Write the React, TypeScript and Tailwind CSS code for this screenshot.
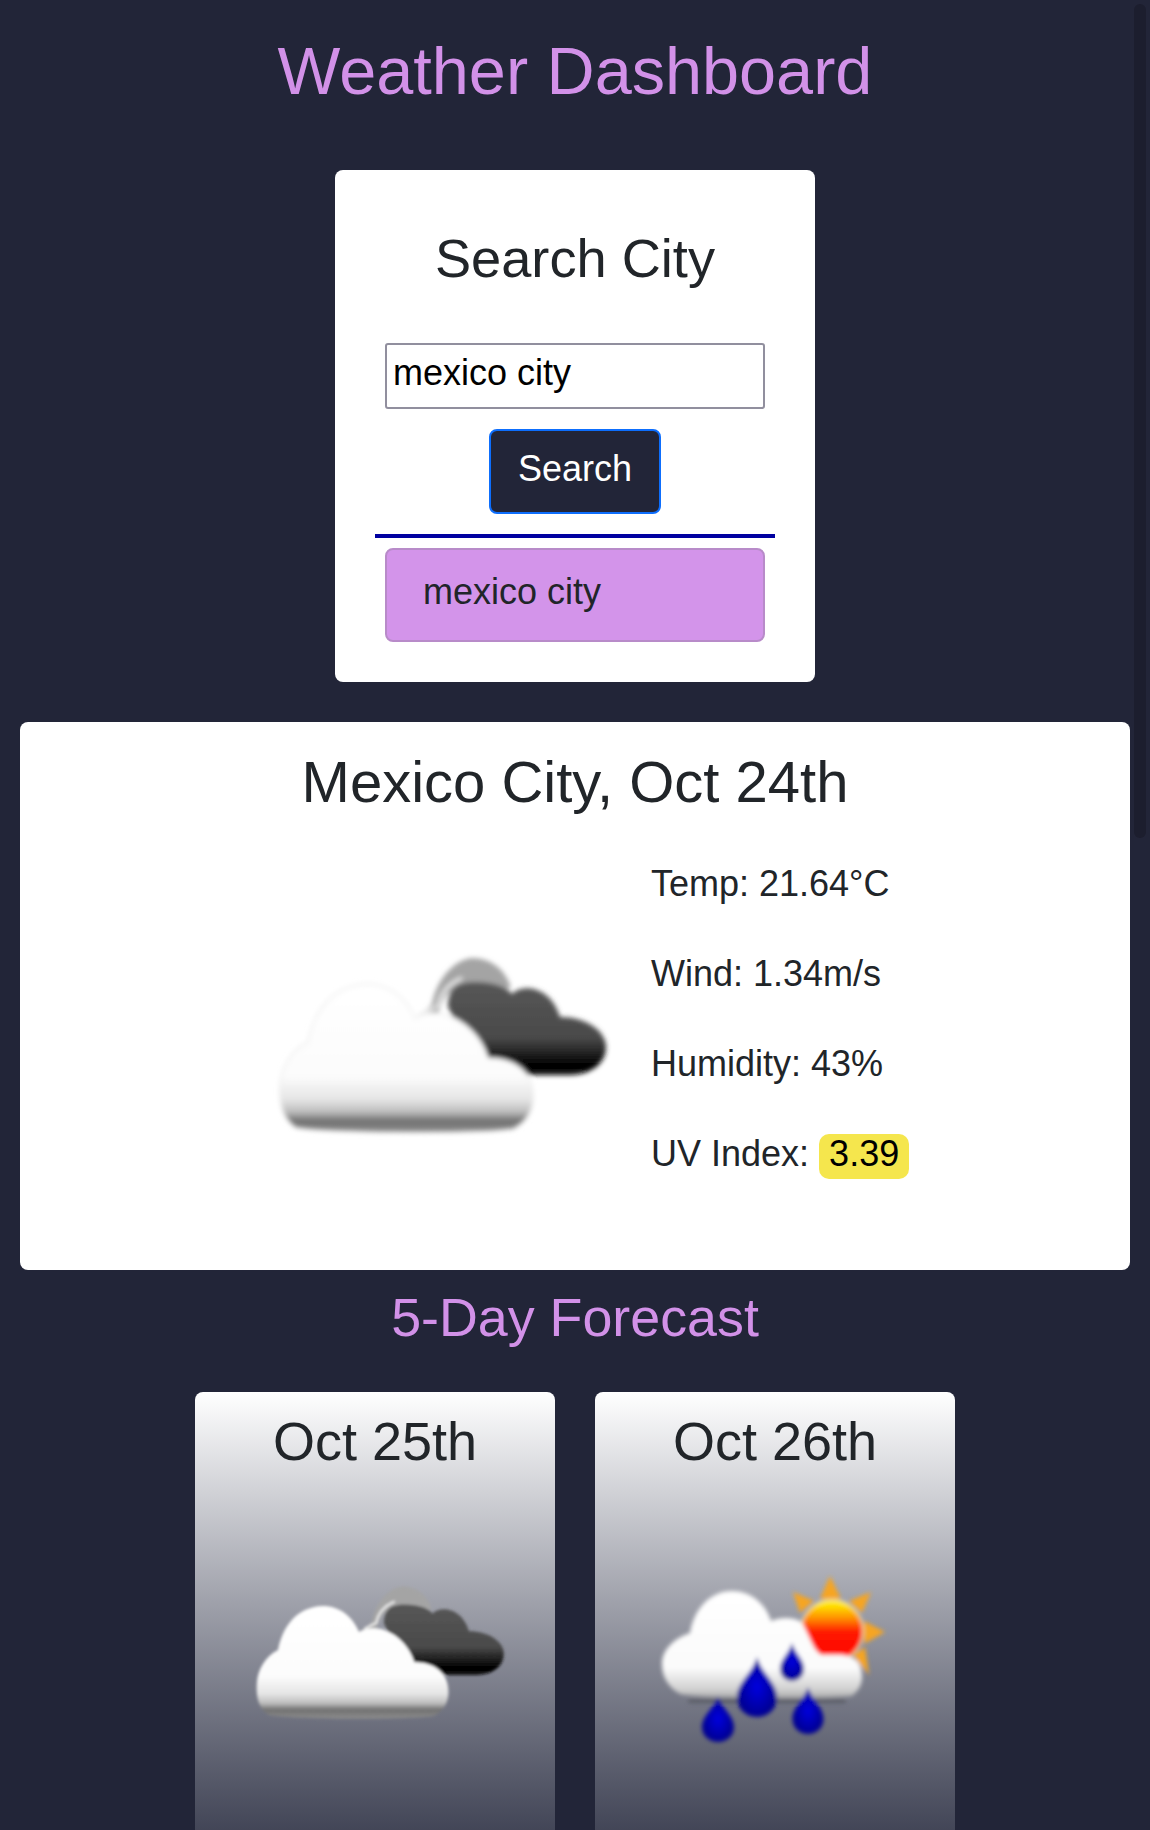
const FONT = "font-['Liberation_Sans',Arial,sans-serif]";

function CloudsIcon({ className, outline }: { className: string; outline?: boolean }) {
  return (
    <svg viewBox="0 0 380 220" className={className}>
      <defs>
        <linearGradient id="dk" x1="0" y1="0" x2="0" y2="1" gradientUnits="objectBoundingBox">
          <stop offset="0" stopColor="#565656" />
          <stop offset="0.6" stopColor="#4a4a4a" />
          <stop offset="0.9" stopColor="#000" />
          <stop offset="1" stopColor="#111" />
        </linearGradient>
        <linearGradient id="wh" x1="0" y1="0" x2="0" y2="1">
          <stop offset="0" stopColor="#fff" />
          <stop offset="0.62" stopColor="#fcfcfc" />
          <stop offset="0.78" stopColor="#e4e4e4" />
          <stop offset="0.86" stopColor="#bdbdbd" />
          <stop offset="0.92" stopColor="#717171" />
          <stop offset="1" stopColor="#8c8c8c" />
        </linearGradient>
        <filter id="bl" x="-10%" y="-10%" width="120%" height="120%">
          <feGaussianBlur stdDeviation="2.4" />
        </filter>
      </defs>
      <g filter="url(#bl)">
        <path d="M166 96C172 90 178 88 182 82C186 60 202 38 222 36C241 36 256 48 261 66L200 70C192 76 190 86 188 92Z" fill="#a4a4a4" />
        <path d="M172 92L188 84C190 72 198 62 212 56" fill="none" stroke="#ececec" strokeWidth="3" />
        <path d="M198 85C198 68 205 60 225 60C245 60 258 66 262 72C270 62 300 62 310 95C335 95 356 108 356 125C356 142 340 153 320 153H280C260 148 250 137 238 136L220 130Z" fill="url(#dk)" />
        <path
          d="M46 206C34 198 29 185 30 165C31 145 42 128 58 120C64 90 82 63 117 62C140 62 156 76 165 96C172 92 182 90 192 92C215 97 232 116 238 136C265 136 283 150 283 175C283 190 276 200 264 207C240 212 80 212 46 206Z"
          fill="url(#wh)"
          stroke={outline ? "#ececec" : "none"}
          strokeWidth="1.5"
        />
      </g>
    </svg>
  );
}

function RainIcon({ className }: { className: string }) {
  const drop = (x: number, top: number, w: number, h: number) =>
    `M${x} ${top}C${x + w * 0.12} ${top + h * 0.28} ${x + w / 2} ${top + h * 0.42} ${x + w / 2} ${top + h * 0.68}C${x + w / 2} ${top + h * 0.88} ${x + w * 0.25} ${top + h} ${x} ${top + h}C${x - w * 0.25} ${top + h} ${x - w / 2} ${top + h * 0.88} ${x - w / 2} ${top + h * 0.68}C${x - w / 2} ${top + h * 0.42} ${x - w * 0.12} ${top + h * 0.28} ${x} ${top}Z`;
  return (
    <svg viewBox="0 0 260 200" className={className}>
      <defs>
        <linearGradient id="sun" x1="0" y1="0" x2="0" y2="1">
          <stop offset="0.08" stopColor="#ffe600" />
          <stop offset="0.3" stopColor="#ff8c00" />
          <stop offset="0.52" stopColor="#ff1800" />
          <stop offset="1" stopColor="#ff0000" />
        </linearGradient>
        <linearGradient id="wh2" x1="0" y1="0" x2="0" y2="1">
          <stop offset="0" stopColor="#fff" />
          <stop offset="0.72" stopColor="#fbfbfb" />
          <stop offset="0.92" stopColor="#d0d0d0" />
          <stop offset="1" stopColor="#a8a8a8" />
        </linearGradient>
        <radialGradient id="dr">
          <stop offset="0" stopColor="#0000e0" />
          <stop offset="1" stopColor="#000090" />
        </radialGradient>
        <filter id="bl2" x="-10%" y="-10%" width="120%" height="120%">
          <feGaussianBlur stdDeviation="2" />
        </filter>
      </defs>
      <g filter="url(#bl2)">
        <g fill="#f6a523">
          <path d="M190 17L180 40H201Z" />
          <path d="M153 33L160 54L174 42Z" />
          <path d="M231 33L209 42L222 54Z" />
          <path d="M245 73L224 62V85Z" />
          <path d="M229 116L213 96L225 88Z" />
        </g>
        <circle cx="192" cy="72" r="31" fill="url(#sun)" stroke="#ffe9b0" strokeWidth="1.5" />
        <rect x="48" y="140" width="158" height="4" rx="2" fill="#5a5c66" />
        <path
          d="M40 135C28 128 22 118 22 105C22 92 32 80 50 74C54 50 70 32 92 32C112 32 126 46 131 62C140 58 152 58 160 62C168 70 172 92 182 96C200 96 222 92 222 118C222 126 218 132 212 137C180 140 60 140 40 135Z"
          fill="url(#wh2)"
        />
        <path d={drop(117, 98, 40, 60)} fill="url(#dr)" />
        <path d={drop(152, 84, 24, 38)} fill="url(#dr)" />
        <path d={drop(168, 128, 31, 47)} fill="url(#dr)" />
        <path d={drop(78, 137, 32, 46)} fill="url(#dr)" />
      </g>
    </svg>
  );
}

function DayCard({ date, children }: { date: string; children: React.ReactNode }) {
  return (
    <div className="w-[360px] h-[530px] rounded-lg bg-gradient-to-b from-white to-[#222538] text-center shrink-0">
      <h3 className="pt-[14px] text-[54px] leading-[70px] text-[#212529]">{date}</h3>
      {children}
    </div>
  );
}

export default function App() {
  return (
    <div className={`${FONT} relative w-[1150px] h-[1830px] overflow-hidden bg-[#222538] text-[#212529]`}>
      <div className="absolute left-[1134px] top-[4px] w-[12px] h-[834px] rounded-full bg-[#1c1e2e]" />

      <h1 className="pt-[31px] text-center text-[66.6px] leading-[80px] text-[#d291e8]">Weather Dashboard</h1>

      <section className="mx-auto mt-[59px] w-[480px] h-[512px] rounded-lg bg-white flex flex-col items-center">
        <h2 className="mt-[55px] text-[54.2px] leading-[66px] text-center">Search City</h2>
        <input
          readOnly
          value="mexico city"
          className="mt-[52px] w-[380px] h-[66px] rounded-[3px] border-2 border-[#918f9e] bg-white px-[6px] pb-[7px] text-[36px] text-black outline-none"
        />
        <button className="mt-[20px] w-[172px] h-[85px] rounded-lg border-2 border-[#0d6efd] bg-[#222538] pb-[5px] text-[36px] text-white">
          Search
        </button>
        <div className="mt-[20px] w-[400px] h-[4px] bg-[#0000a0]" />
        <div className="mt-[10px] w-[380px] h-[94px] rounded-lg border-2 border-[#b88bc9] bg-[#d394ea] pl-[36px] pt-[20px] text-[36px] leading-[44px]">
          mexico city
        </div>
      </section>

      <section className="mx-[20px] mt-[40px] h-[548px] w-[1110px] rounded-lg bg-white">
        <h2 className="pt-[27px] text-center text-[58px] leading-[66px]">Mexico City, Oct 24th</h2>
        <div className="flex pl-[230px]">
          <CloudsIcon outline className="w-[380px] h-[220px] mt-[107px] shrink-0" />
          <ul className="ml-[21px] mt-[42px] flex flex-col gap-[36px] text-[36px] leading-[54px]">
            <li>Temp: 21.64°C</li>
            <li>Wind: 1.34m/s</li>
            <li>Humidity: 43%</li>
            <li>
              UV Index:{" "}
              <span className="inline-block h-[45px] rounded-[10px] bg-[#f5e64d] px-[10px] leading-[40px] text-black">3.39</span>
            </li>
          </ul>
        </div>
      </section>

      <h2 className="mt-[14px] text-center text-[53.8px] leading-[66px] text-[#d291e8]">5-Day Forecast</h2>

      <div className="mt-[42px] flex justify-center gap-[40px]">
        <DayCard date="Oct 25th">
          <CloudsIcon className="ml-[39px] mt-[83px] w-[288px] h-[167px]" />
        </DayCard>
        <DayCard date="Oct 26th">
          <RainIcon className="ml-[45px] mt-[83px] w-[260px] h-[200px]" />
        </DayCard>
      </div>
    </div>
  );
}
